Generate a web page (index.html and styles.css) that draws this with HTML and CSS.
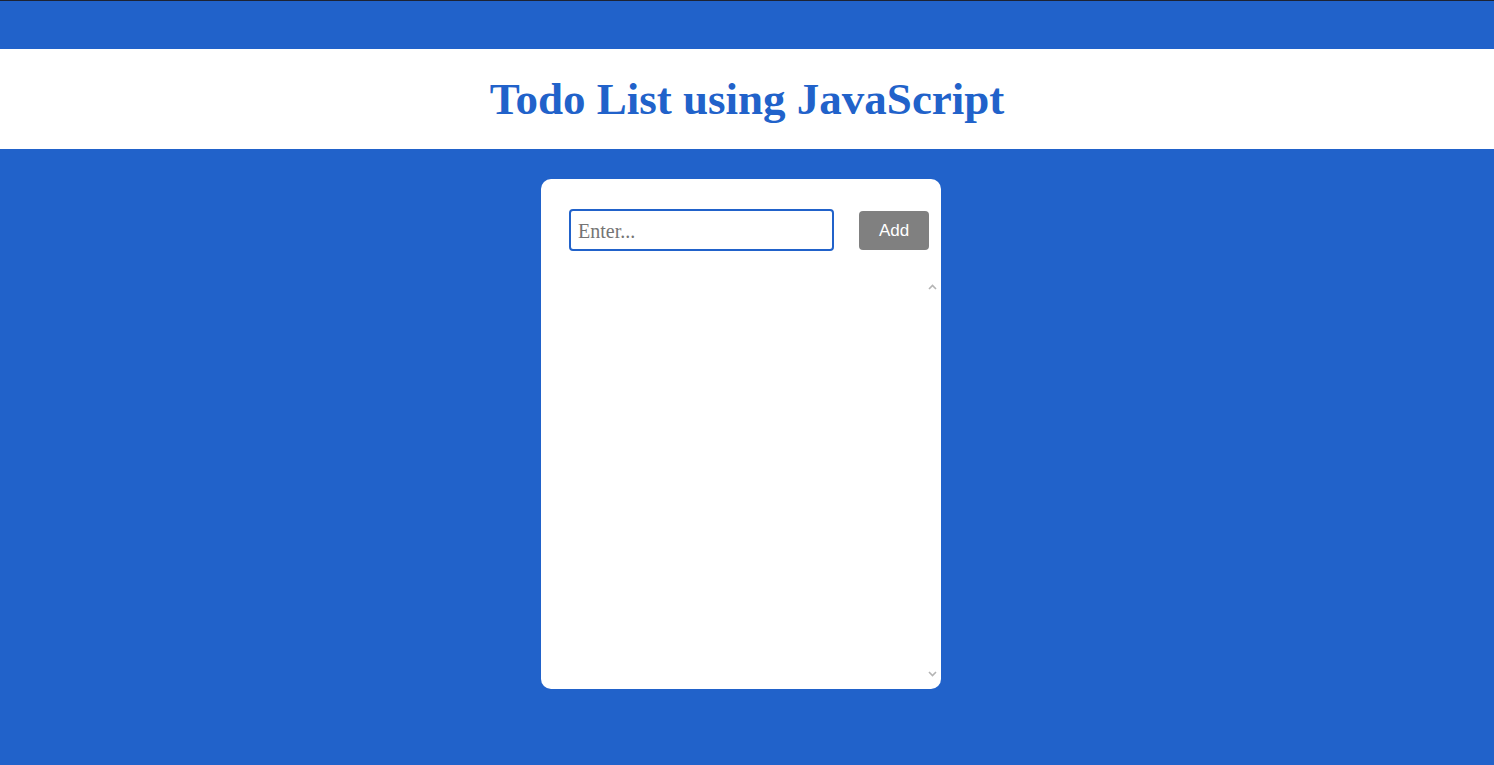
FILE: index.html
```html
<!DOCTYPE html>
<html>
<head>
<meta charset="utf-8">
<link rel="stylesheet" href="styles.css">
</head>
<body>
<div class="topbar"></div>
<header class="header"><h1 class="title">Todo List using JavaScript</h1></header>
<main class="main">
  <section class="card">
    <div class="form-row">
      <input class="todo-input" type="text" placeholder="Enter...">
      <button class="add-btn">Add</button>
    </div>
    <div class="list-area">
      <ul class="list"></ul>
      <div class="scroll">
        <svg class="chev" width="9" height="6" viewBox="0 0 9 6"><path d="M1 5 L4.5 1.5 L8 5" fill="none" stroke="#b4b4b4" stroke-width="1.6"/></svg>
        <svg class="chev" width="9" height="6" viewBox="0 0 9 6"><path d="M1 1 L4.5 4.5 L8 1" fill="none" stroke="#b4b4b4" stroke-width="1.6"/></svg>
      </div>
    </div>
  </section>
</main>
</body>
</html>
```
FILE: styles.css
```css
html, body {
  margin: 0;
  padding: 0;
}
body {
  background: #2162ca;
  border-top: 1px solid #1d2333;
  height: 764px;
  font-family: "Liberation Serif", serif;
}
.topbar {
  height: 48px;
}
.header {
  background: #ffffff;
  height: 100px;
  display: flex;
  align-items: center;
  justify-content: center;
}
.title {
  margin: 0;
  font-family: "Liberation Serif", serif;
  font-weight: bold;
  font-size: 45px;
  color: #2162ca;
  line-height: 1;
}
.main {
  display: flex;
  justify-content: center;
  padding-top: 30px;
  padding-right: 12px;
}
.card {
  width: 400px;
  height: 510px;
  background: #ffffff;
  border-radius: 10px;
  box-sizing: border-box;
  padding: 30px 12px 8px 28px;
  display: flex;
  flex-direction: column;
}
.form-row {
  display: flex;
  align-items: flex-start;
  gap: 25px;
}
.todo-input {
  width: 265px;
  height: 42px;
  box-sizing: border-box;
  border: 2px solid #2162ca;
  border-radius: 4px;
  padding: 3px 7px 0;
  font-family: "Liberation Serif", serif;
  font-size: 20px;
  color: #333;
  outline: none;
}
.todo-input::placeholder {
  color: #757575;
}
.add-btn {
  width: 70px;
  height: 39px;
  border: none;
  border-radius: 4px;
  background: #808080;
  color: #ffffff;
  font-family: "Liberation Sans", Arial, sans-serif;
  font-size: 17px;
  padding: 0;
  margin-top: 2px;
}
.list-area {
  flex: 1;
  display: flex;
  margin-top: 30px;
  margin-right: -8px;
}
.list {
  flex: 1;
  margin: 0;
  padding: 0;
  list-style: none;
}
.scroll {
  width: 9px;
  display: flex;
  flex-direction: column;
  justify-content: space-between;
  padding: 3px 0 4px;
}
.chev {
  display: block;
}
```
